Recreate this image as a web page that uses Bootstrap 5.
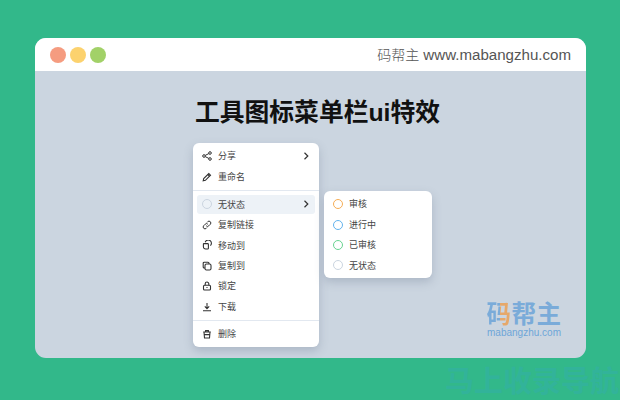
<!DOCTYPE html>
<html lang="zh">
<head>
<meta charset="utf-8">
<link rel="stylesheet" href="https://cdn.jsdelivr.net/npm/bootstrap@5.3.0/dist/css/bootstrap.min.css">
<style>
html,body{height:400px;overflow:hidden}
body{background:#32b88a;font-family:"Liberation Sans","Noto Sans CJK SC",sans-serif;position:relative;padding:38px 34px 0 35px}
.win{height:320px;background:#cbd5e0;border-radius:11px;overflow:hidden;color:#000}
.win-bar{height:33px;background:#fff;padding:0 15px}
.dot{width:16px;height:16px;border-radius:50%}
.d1{background:#f59c80}.d2{background:#fcd26e}.d3{background:#a2d168}
.dots{gap:4px}
.site{font-size:15.1px;color:#555;line-height:33px;white-space:nowrap}
.site-cn{font-family:"Noto Sans CJK SC",sans-serif;font-size:14px;font-weight:300}
.ttl{font-size:24.8px;font-weight:700;line-height:30px;text-align:center;margin:0;padding:27px 0 0 14px;color:#111}
.stage{padding:15px 0 0 158px}
.pop{background:#fff;border-radius:6px;box-shadow:0 4px 10px rgba(90,105,130,.28);font-size:9px;color:#444;font-family:"Noto Sans CJK SC",sans-serif;white-space:nowrap}
.menu-main{width:126px;height:204px;padding:3px 4px 0;position:relative}
.menu-sub{width:108px;height:87px;padding:3px 5px 3px 4px;position:absolute;left:131px;top:48px}
.it{height:20.4px;padding:0 5px}
.it-on{background:#edf2f7;border-radius:3px;height:19px;margin:4px 0 1px}
.ic{width:10px;height:10px;margin-right:6px;flex:none;display:block}
.sep{height:1px;background:#e2e8f0;margin:3px -4px}
.ring{width:10px;height:10px;border-radius:50%;border:1.5px solid;margin-right:6px;flex:none}
.r0{border-color:#cbd5e0}.r1{border-color:#f6ad55}.r2{border-color:#63b3ed}.r3{border-color:#68d391}
.chev{margin-left:auto;margin-right:1px;width:6px;height:8px}
.logo{position:absolute;left:486px;top:301px;width:76px;text-align:center;line-height:1}
.logo-cn{font-size:24.5px;font-weight:700;letter-spacing:.5px;display:block;white-space:nowrap;font-family:"Noto Sans CJK SC",sans-serif;color:#7aabd9}
.logo-ma{background:linear-gradient(90deg,#7aabd9 52%,#e6a86a 52%);-webkit-background-clip:text;background-clip:text;color:transparent}
.logo-en{font-size:10px;display:block;margin-top:2px;color:#6ea6d8}
.wm{position:absolute;left:445px;top:360px;white-space:nowrap;font-size:29px;font-weight:700;line-height:38px;color:#32b39a;font-family:"Noto Sans CJK SC",sans-serif}
</style>
</head>
<body>
<div class="win">
  <div class="win-bar d-flex align-items-center justify-content-between">
    <div class="d-flex dots"><div class="dot d1"></div><div class="dot d2"></div><div class="dot d3"></div></div>
    <div class="site"><span class="site-cn">码帮主</span> www.mabangzhu.com</div>
  </div>
  <h1 class="ttl">工具图标菜单栏ui特效</h1>
  <div class="stage">
    <div class="pop menu-main">
      <div class="it d-flex align-items-center">
        <svg class="ic" viewBox="0 0 10 10" fill="none" stroke="#333" stroke-width="1"><circle cx="2" cy="5" r="1.3"/><circle cx="8" cy="2" r="1.3"/><circle cx="8" cy="8" r="1.3"/><path d="M3.2 4.4 6.8 2.6M3.2 5.6 6.8 7.4"/></svg>分享
        <svg class="chev" viewBox="0 0 6 8" fill="none" stroke="#333" stroke-width="1.2"><path d="M1.5 .8 4.8 4 1.5 7.2"/></svg>
      </div>
      <div class="it d-flex align-items-center">
        <svg class="ic" viewBox="0 0 10 10" fill="none" stroke="#333" stroke-width="1.1"><path d="M1.2 8.8 1.7 6.6 6.8 1.5 8.5 3.2 3.4 8.3Z"/><path d="M5.8 2.5 7.5 4.2"/></svg>重命名
      </div>
      <div class="sep"></div>
      <div class="it it-on d-flex align-items-center">
        <span class="ring r0"></span>无状态
        <svg class="chev" viewBox="0 0 6 8" fill="none" stroke="#333" stroke-width="1.2"><path d="M1.5 .8 4.8 4 1.5 7.2"/></svg>
      </div>
      <div class="it d-flex align-items-center">
        <svg class="ic" viewBox="0 0 10 10" fill="none" stroke="#333" stroke-width="1"><path d="M4.2 5.8a1.8 1.8 0 0 0 2.6 0L8.3 4.3A1.8 1.8 0 0 0 5.7 1.7L5 2.4"/><path d="M5.8 4.2a1.8 1.8 0 0 0-2.6 0L1.7 5.7a1.8 1.8 0 0 0 2.6 2.6L5 7.6"/></svg>复制链接
      </div>
      <div class="it d-flex align-items-center">
        <svg class="ic" viewBox="0 0 10 10" fill="none" stroke="#333" stroke-width="1.1"><path d="M3.2 2.2A3.2 3.2 0 1 1 8.4 5.6"/><path d="M1.8 3.6H5.6A.8.8 0 0 1 6.4 4.4V8.2A.8.8 0 0 1 5.6 9H3.6A2.2 2.2 0 0 1 1.4 6.8V4A.4.4 0 0 1 1.8 3.6Z"/></svg>移动到
      </div>
      <div class="it d-flex align-items-center">
        <svg class="ic" viewBox="0 0 10 10" fill="none" stroke="#333" stroke-width="1.1"><rect x="3" y="3" width="6" height="6" rx="1.4"/><path d="M3 7H2.2A1 1 0 0 1 1.2 6V2.2A1 1 0 0 1 2.2 1.2H6A1 1 0 0 1 7 2.2V3"/></svg>复制到
      </div>
      <div class="it d-flex align-items-center">
        <svg class="ic" viewBox="0 0 10 10" fill="none" stroke="#333" stroke-width="1.1"><rect x="1.5" y="4.2" width="7" height="4.8" rx="1"/><path d="M3.2 4.2V2.8a1.8 1.8 0 0 1 3.6 0V4.2M5 6v1"/></svg>锁定
      </div>
      <div class="it d-flex align-items-center">
        <svg class="ic" viewBox="0 0 10 10" fill="none" stroke="#333" stroke-width="1.1"><path d="M5 1V6.4M2.8 4.4 5 6.6 7.2 4.4M1 8.8H9"/></svg>下载
      </div>
      <div class="sep"></div>
      <div class="it d-flex align-items-center">
        <svg class="ic" viewBox="0 0 10 10" fill="none" stroke="#333" stroke-width="1.1"><path d="M1.2 3H8.8M3.6 3V1.6H6.4V3M2 3 2.5 9H7.5L8 3M2.3 5.6H7.7"/></svg>删除
      </div>
      <div class="pop menu-sub">
        <div class="it d-flex align-items-center"><span class="ring r1"></span>审核</div>
        <div class="it d-flex align-items-center"><span class="ring r2"></span>进行中</div>
        <div class="it d-flex align-items-center"><span class="ring r3"></span>已审核</div>
        <div class="it d-flex align-items-center"><span class="ring r0"></span>无状态</div>
      </div>
    </div>
  </div>
</div>
<div class="logo"><span class="logo-cn"><span class="logo-ma">码</span>帮主</span><span class="logo-en">mabangzhu.com</span></div>
<div class="wm">马上收录导航</div>
<script src="https://cdn.jsdelivr.net/npm/bootstrap@5.3.0/dist/js/bootstrap.bundle.min.js"></script>
</body>
</html>
